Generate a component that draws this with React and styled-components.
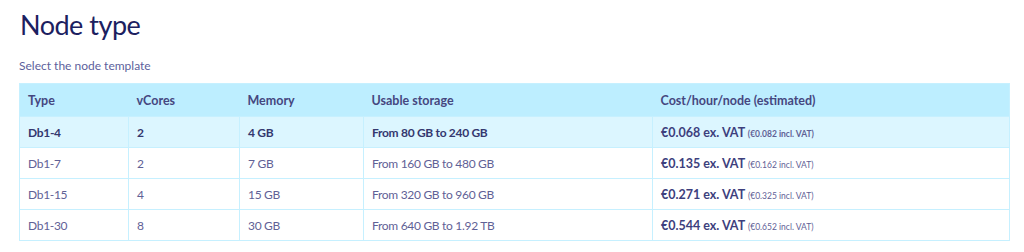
import React from "react";
import styled, { createGlobalStyle } from "styled-components";

const rows = [
  { type: "Db1-4", cores: 2, memory: "4 GB", storage: "From 80 GB to 240 GB", cost: "€0.068", incl: "€0.082", selected: true },
  { type: "Db1-7", cores: 2, memory: "7 GB", storage: "From 160 GB to 480 GB", cost: "€0.135", incl: "€0.162" },
  { type: "Db1-15", cores: 4, memory: "15 GB", storage: "From 320 GB to 960 GB", cost: "€0.271", incl: "€0.325" },
  { type: "Db1-30", cores: 8, memory: "30 GB", storage: "From 640 GB to 1.92 TB", cost: "€0.544", incl: "€0.652" }
];

const columns = [
  { label: "Type", width: 109 },
  { label: "vCores", width: 111 },
  { label: "Memory", width: 124 },
  { label: "Usable storage", width: 289 },
  { label: "Cost/hour/node (estimated)", width: 357 }
];

const App = () => (
  <>
    <GlobalStyle />
    <Page>
      <Title>Node type</Title>
      <Subtitle>Select the node template</Subtitle>
      <Table>
        <colgroup>
          {columns.map(col => (
            <col key={col.label} style={{ width: col.width }} />
          ))}
        </colgroup>
        <thead>
          <tr>
            {columns.map(col => (
              <HeadCell key={col.label}>{col.label}</HeadCell>
            ))}
          </tr>
        </thead>
        <tbody>
          {rows.map(row => (
            <Row key={row.type} selected={row.selected}>
              <Cell>{row.type}</Cell>
              <Cell>{row.cores}</Cell>
              <Cell>{row.memory}</Cell>
              <Cell>{row.storage}</Cell>
              <Cell>
                <Price>{row.cost} ex. VAT</Price> <Incl>({row.incl} incl. VAT)</Incl>
              </Cell>
            </Row>
          ))}
        </tbody>
      </Table>
    </Page>
  </>
);

const GlobalStyle = createGlobalStyle`
  body {
    margin: 0;
    background: #ffffff;
    font-family: Lato, "Noto Sans", sans-serif;
  }
`;

const Page = styled.div`
  padding: 8px 15px 0 19px;
`;

const Title = styled.h1`
  margin: 0 0 0 1px;
  font-size: 27px;
  line-height: 34px;
  font-weight: 400;
  letter-spacing: -0.5px;
  color: #1c2060;
`;

const Subtitle = styled.p`
  margin: 16px 0 10px;
  font-size: 12px;
  line-height: 15px;
  color: #5d5f9c;
`;

const Table = styled.table`
  width: 990px;
  border-collapse: collapse;
  table-layout: fixed;
  border: 1px solid #c6f0ff;
`;

const HeadCell = styled.th`
  height: 32px;
  padding: 0 8px;
  text-align: left;
  background: #bdeeff;
  font-size: 12.5px;
  font-weight: 700;
  color: #45477f;
`;

const Row = styled.tr`
  background: ${p => (p.selected ? "#dcf6ff" : "#ffffff")};
  color: ${p => (p.selected ? "#34386f" : "#5f6196")};
  font-weight: ${p => (p.selected ? 700 : 400)};
`;

const Cell = styled.td`
  height: 30px;
  padding: 0 8px;
  font-size: 12px;
  letter-spacing: -0.3px;
  border: 1px solid #c6f0ff;
  white-space: nowrap;
`;

const Price = styled.span`
  font-weight: 700;
  font-size: 12.5px;
  letter-spacing: 0;
  color: #3d3f7d;
`;

const Incl = styled.span`
  font-size: 8.5px;
  letter-spacing: 0;
  color: #5f6196;
`;

export default App;
